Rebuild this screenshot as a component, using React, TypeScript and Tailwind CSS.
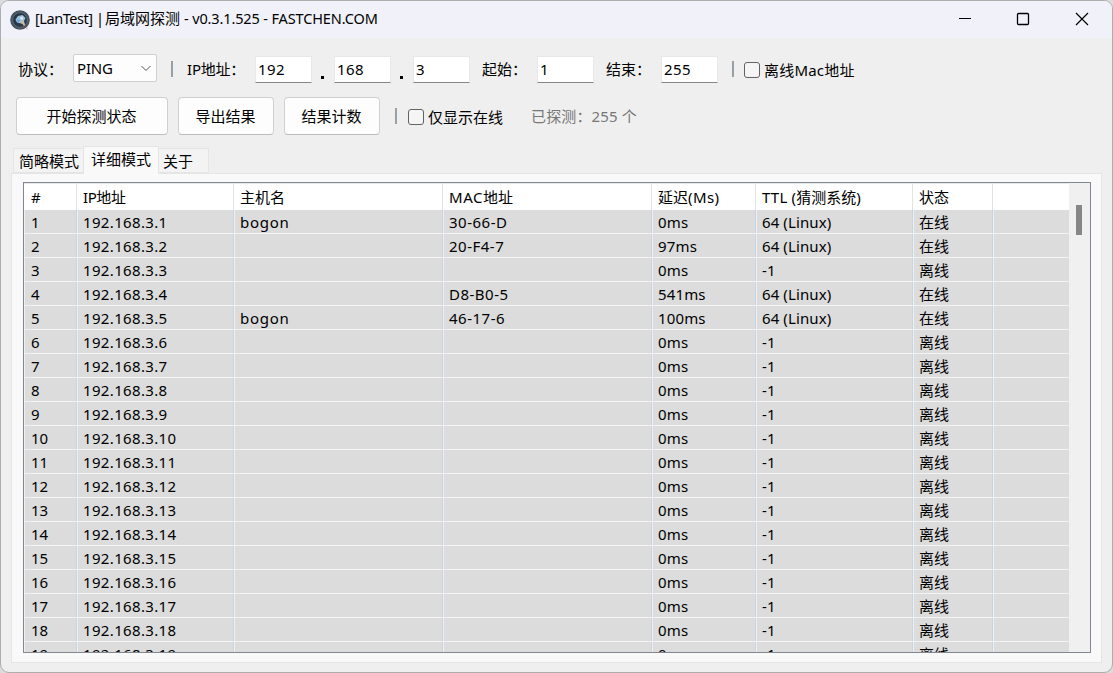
import React from "react";

const statuses = ["在线", "在线", "离线", "在线", "在线"];
const delays = ["0ms", "97ms", "0ms", "541ms", "100ms"];
const macs = ["30-66-D", "20-F4-7", "", "D8-B0-5", "46-17-6"];
const hosts = ["bogon", "", "", "", "bogon"];

const rows = Array.from({ length: 19 }, (_, i) => ({
  id: i + 1,
  host: hosts[i] ?? "",
  mac: macs[i] ?? "",
  delay: delays[i] ?? "0ms",
  ttl: statuses[i] === "在线" ? "64 (Linux)" : "-1",
  status: statuses[i] ?? "离线",
}));

const grid = "grid grid-cols-[53px_157px_209px_209px_104px_157px_80px_75px]";

function Field({ value, className }: { value: string; className: string }) {
  return (
    <div
      className={`h-[27px] w-[57px] shrink-0 border border-[#e8e8e8] border-b-[#868686] bg-white pl-[2px] text-[15px] leading-[25px] tracking-[0.4px] ${className}`}
    >
      {value}
    </div>
  );
}

function Bar({ className }: { className: string }) {
  return <div className={`h-4 w-0.5 shrink-0 border-l border-[#a39a90] bg-[#8fa4b8] ${className}`} />;
}

function Check({ className }: { className: string }) {
  return <div className={`size-4 shrink-0 rounded-[3px] border border-[#626262] bg-[#f5f5f5] ${className}`} />;
}

function Button({ children, className }: { children: React.ReactNode; className: string }) {
  return (
    <button
      className={`h-[38px] shrink-0 rounded-[4px] border border-[#d0d0d0] border-b-[#bcbcbc] bg-[#fdfdfd] pr-px pb-px text-[15px] leading-5 ${className}`}
    >
      {children}
    </button>
  );
}

function AppIcon() {
  return (
    <svg className="mt-px ml-[9px] size-5 shrink-0" viewBox="0 0 20 20">
      <circle cx="10" cy="10" r="9.8" fill="#46525f" />
      <circle cx="10" cy="10" r="7.4" fill="#28374a" stroke="#66727f" strokeWidth="0.8" />
      <path d="M5.5 9.5 L8 6 L12.5 5 L15.5 8 L14 11 L15 15 L11 13.5 L7 12.5Z" fill="#9fc0da" />
      <path d="M6.5 9 L10 10.5 L8.5 12.5Z" fill="#4c9fe0" />
      <path d="M9.5 8 L13 6.5 L12.5 10Z" fill="#eaf3f9" />
      <path d="M11.5 11 L14.5 15.5" stroke="#e8b27a" strokeWidth="1.4" />
      <circle cx="17" cy="18.5" r="1" fill="#eab8ba" />
    </svg>
  );
}

export default function App() {
  return (
    <div className="h-[673px] w-[1113px] overflow-hidden bg-[#dcdcdc] font-['Noto_Sans','Noto_Sans_CJK_SC',sans-serif] text-[15px] whitespace-nowrap text-black">
      <div className="flex h-full flex-col overflow-hidden rounded-[9px] border border-[#adadad] bg-[#efefef]">
        <header className="flex h-[37px] shrink-0 items-center bg-[#f1f2f9]">
          <AppIcon />
          <div className="-mt-[3px] ml-[5px] flex text-[14.5px] leading-5">
            <span className="w-[70px] tracking-[-0.45px]">[LanTest] | </span>
            <span className="w-[75px] text-[15px]">局域网探测</span>
            <span className="ml-1 tracking-[-0.13px]">- v0.3.1.525 - FASTCHEN.COM</span>
          </div>
          <svg className="ml-auto h-[37px] w-[160px]" viewBox="0 0 160 37" fill="none" stroke="#000">
            <path d="M7 17.5H19" />
            <rect x="65.5" y="12.5" width="11" height="11" rx="1" strokeWidth="1.3" />
            <path d="M124 12L136 24M136 12L124 24" strokeWidth="1.2" />
          </svg>
        </header>

        <div className="flex h-[52px] shrink-0 items-start pt-4">
          <div className="mt-[5px] ml-[17px] w-[55px] leading-5">协议：</div>
          <div className="flex h-[28px] w-[84px] shrink-0 items-center rounded-[2px] border border-[#cfcfcf] bg-[#fdfdfd] pl-[3px]">
            <span className="text-[15px] leading-5 tracking-[-0.2px]">PING</span>
            <svg className="mr-1 ml-auto size-3" viewBox="0 0 12 12" fill="none" stroke="#555">
              <path d="M1.5 4L6 8.5L10.5 4" />
            </svg>
          </div>
          <Bar className="mt-[7px] ml-3.5" />
          <div className="mt-[5px] ml-3.5 w-[68px] leading-5 tracking-[-0.2px]">IP地址：</div>
          <Field value="192" className="mt-0.5" />
          <div className="mt-[22px] ml-[9px] size-[3px] shrink-0 bg-black" />
          <Field value="168" className="mt-0.5 ml-[10px]" />
          <div className="mt-[22px] ml-[9px] size-[3px] shrink-0 bg-black" />
          <Field value="3" className="mt-0.5 ml-[10px]" />
          <div className="mt-[5px] ml-3 w-[55px] leading-5">起始：</div>
          <Field value="1" className="mt-0.5" />
          <div className="mt-[5px] ml-3 w-[55px] leading-5">结束：</div>
          <Field value="255" className="mt-0.5" />
          <Bar className="mt-[7px] ml-3.5" />
          <Check className="mt-2 ml-[10px]" />
          <div className="mt-1.5 ml-1 leading-5 tracking-[0.2px]">离线Mac地址</div>
        </div>

        <div className="mt-[7px] flex h-[49px] shrink-0 items-start">
          <Button className="ml-[15px] w-[152px]">开始探测状态</Button>
          <Button className="ml-[10px] w-[96px]">导出结果</Button>
          <Button className="ml-[10px] w-[96px]">结果计数</Button>
          <Bar className="mt-[11px] ml-[15px]" />
          <Check className="mt-3 ml-[11px]" />
          <div className="mt-[10px] ml-1 leading-5">仅显示在线</div>
          <div className="mt-[9px] ml-7 leading-5 tracking-[0.15px] text-[#777]">已探测：255 个</div>
        </div>

        <div className="z-10 ml-3 flex h-[28px] shrink-0 items-end">
          <div className="mb-px h-[25px] w-[70px] border border-r-0 border-[#e5e5e5] bg-[#f3f3f3] pl-[5px] leading-[25px]">简略模式</div>
          <div className="h-[28px] w-[76px] border border-b-0 border-[#e5e5e5] bg-[#f9f9f9] pl-[7px] leading-[25px]">详细模式</div>
          <div className="mb-px h-[25px] w-[50px] border border-l-0 border-[#e5e5e5] bg-[#f3f3f3] pl-1 leading-[25px]">关于</div>
        </div>

        <div className="-mt-px ml-[10px] h-[490px] w-[1091px] shrink-0 border border-[#e5e5e5] bg-[#f9f9f9] pt-2 pl-[11px]">
          <div className="flex h-[471px] w-[1068px] overflow-hidden border border-[#828790] bg-white">
            <div className="w-[1045px] shrink-0 overflow-hidden">
              <div className={`${grid} h-[27px] border-t border-[#e8e8e8] text-[15px] leading-[26px] *:border-r *:border-[#e3e3e3] *:pl-[6px]`}>
                <div className="!pl-[7px]">#</div>
                <div className="tracking-[-0.4px]">IP地址</div>
                <div>主机名</div>
                <div className="tracking-[0.55px]">
                  MAC<span className="tracking-normal">地址</span>
                </div>
                <div>
                  延迟<span className="tracking-[0.4px]">(Ms)</span>
                </div>
                <div>
                  <span className="tracking-[0.2px]">TTL (</span>猜测系统)
                </div>
                <div>状态</div>
                <div className="!border-r-0" />
              </div>
              {rows.map((r) => (
                <div
                  key={r.id}
                  className={`${grid} h-6 border-b border-[#f3f3f3] bg-[#dcdcdc] leading-[25px] *:h-[23px] *:border-r *:border-l *:border-r-[#c8d3e4] *:border-l-[#f0f0f0] *:pl-[5px]`}
                >
                  <div className="!pl-[6px]">{r.id}</div>
                  <div className="tracking-[0.35px]">{`192.168.3.${r.id}`}</div>
                  <div className="tracking-[0.7px]">{r.host}</div>
                  <div className="tracking-[0.5px]">{r.mac}</div>
                  <div className="tracking-[0.15px]">{r.delay}</div>
                  <div className="tracking-[0.1px]">{r.ttl}</div>
                  <div>{r.status}</div>
                  <div className="!border-r-0" />
                </div>
              ))}
            </div>
            <div className="w-[21px] bg-[#f0f0f0] pt-[22px] pl-[7px]">
              <div className="h-[30px] w-[6px] bg-[#868686]" />
            </div>
          </div>
        </div>
      </div>
    </div>
  );
}
